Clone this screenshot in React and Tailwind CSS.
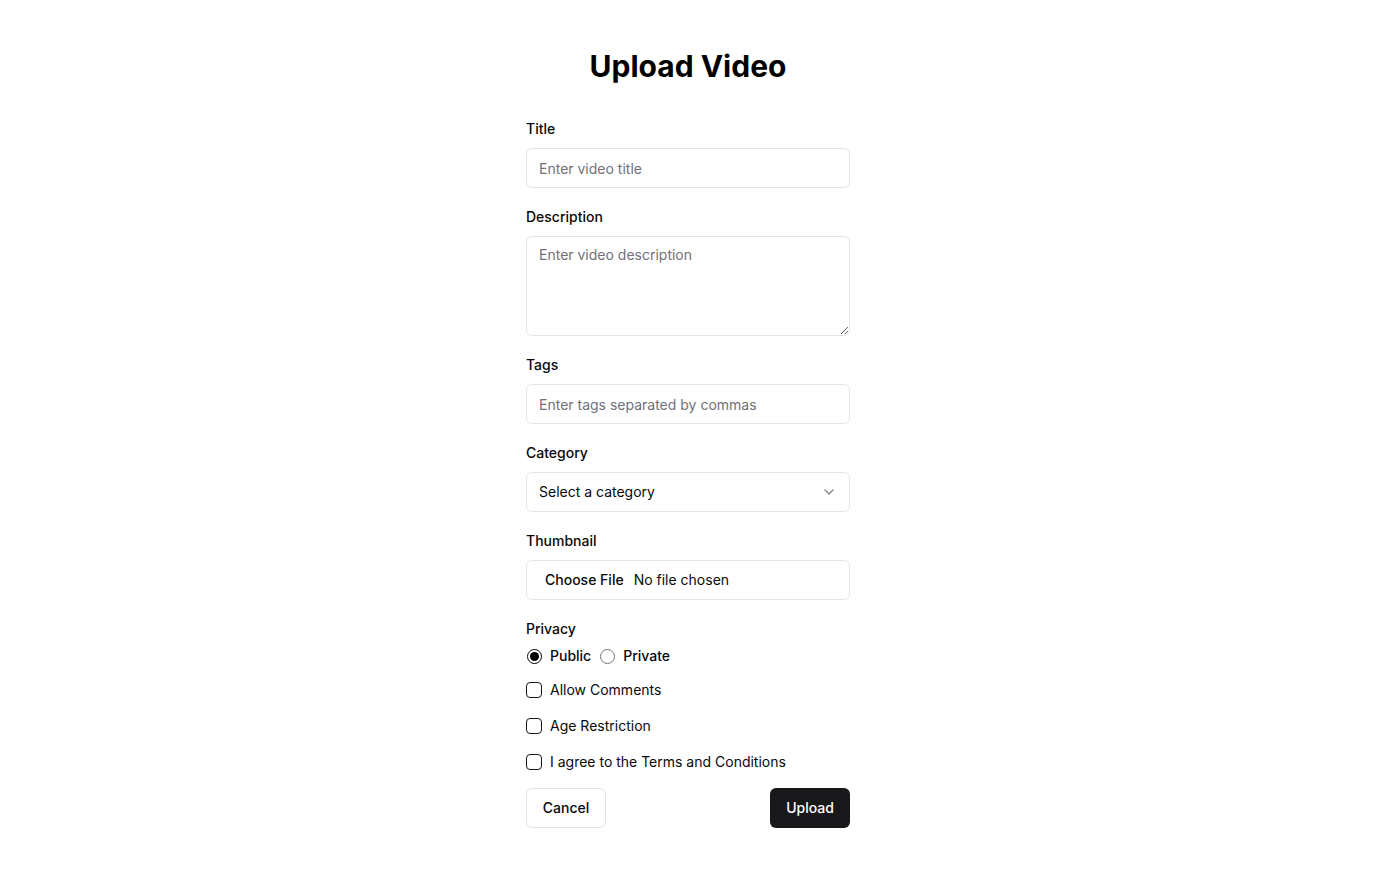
import React, { useState } from "react";
import { ChevronDown } from "lucide-react";

const labelCls = "block text-sm font-medium leading-[18px] text-[#09090b] mb-[10px]";
const inputCls =
    "w-full h-10 rounded-md border border-[#e4e4e7] bg-white px-3 text-sm text-[#09090b] placeholder:text-[#71717a] outline-none";

export default function App() {
    const [privacy, setPrivacy] = useState("public");

    return (
        <div className="min-h-screen bg-white font-['Inter',sans-serif] text-[#09090b]">
            <div className="w-[324px] mx-auto pt-12 pb-12">
                <h1 className="text-3xl leading-9 font-bold text-center text-black mb-9">Upload Video</h1>

                <form className="flex flex-col gap-5" onSubmit={(e) => e.preventDefault()}>
                    <div>
                        <label className={labelCls}>Title</label>
                        <input type="text" placeholder="Enter video title" className={inputCls} />
                    </div>

                    <div>
                        <label className={labelCls}>Description</label>
                        <textarea
                            placeholder="Enter video description"
                            className="block w-full h-[100px] rounded-md border border-[#e4e4e7] bg-white px-3 py-2 text-sm text-[#09090b] placeholder:text-[#71717a] outline-none"
                        />
                    </div>

                    <div>
                        <label className={labelCls}>Tags</label>
                        <input type="text" placeholder="Enter tags separated by commas" className={inputCls} />
                    </div>

                    <div>
                        <label className={labelCls}>Category</label>
                        <button
                            type="button"
                            className="w-full h-10 flex items-center justify-between rounded-md border border-[#e4e4e7] bg-white px-3 text-sm text-[#09090b]"
                        >
                            <span>Select a category</span>
                            <ChevronDown className="w-4 h-4 opacity-50" />
                        </button>
                    </div>

                    <div>
                        <label className={labelCls}>Thumbnail</label>
                        <input
                            type="file"
                            className="w-full h-10 rounded-md border border-[#e4e4e7] bg-white px-3 pt-[9px] pb-[7px] text-sm text-[#09090b] file:border-0 file:bg-transparent file:px-1.5 file:mr-1 file:text-sm file:font-medium file:text-[#09090b]"
                        />
                    </div>

                    <div>
                        <label className="block text-sm font-medium leading-[18px] mb-2">Privacy</label>
                        <div className="flex items-center gap-2 h-5">
                            <label className="flex items-center gap-2 text-sm font-medium">
                                <input
                                    type="radio"
                                    name="privacy"
                                    checked={privacy === "public"}
                                    onChange={() => setPrivacy("public")}
                                    className="w-[15px] h-[15px] m-0 ml-px accent-black"
                                />
                                Public
                            </label>
                            <label className="flex items-center gap-2 text-sm font-medium">
                                <input
                                    type="radio"
                                    name="privacy"
                                    checked={privacy === "private"}
                                    onChange={() => setPrivacy("private")}
                                    className="w-[15px] h-[15px] m-0 ml-px accent-black"
                                />
                                Private
                            </label>
                        </div>

                        <div className="mt-[14px] flex flex-col gap-4">
                            {["Allow Comments", "Age Restriction", "I agree to the Terms and Conditions"].map((t) => (
                                <label key={t} className="flex items-center gap-2 h-5 text-sm">
                                    <span className="w-4 h-4 rounded-[4px] border border-[#18181b] bg-white shrink-0" />
                                    {t}
                                </label>
                            ))}
                        </div>
                    </div>

                    <div className="flex justify-between -mt-1">
                        <button
                            type="button"
                            className="h-10 w-20 rounded-md border border-[#e4e4e7] bg-white text-sm font-medium text-[#09090b]"
                        >
                            Cancel
                        </button>
                        <button type="submit" className="h-10 w-20 rounded-md bg-[#18181b] text-sm font-medium text-white">
                            Upload
                        </button>
                    </div>
                </form>
            </div>
        </div>
    );
}
